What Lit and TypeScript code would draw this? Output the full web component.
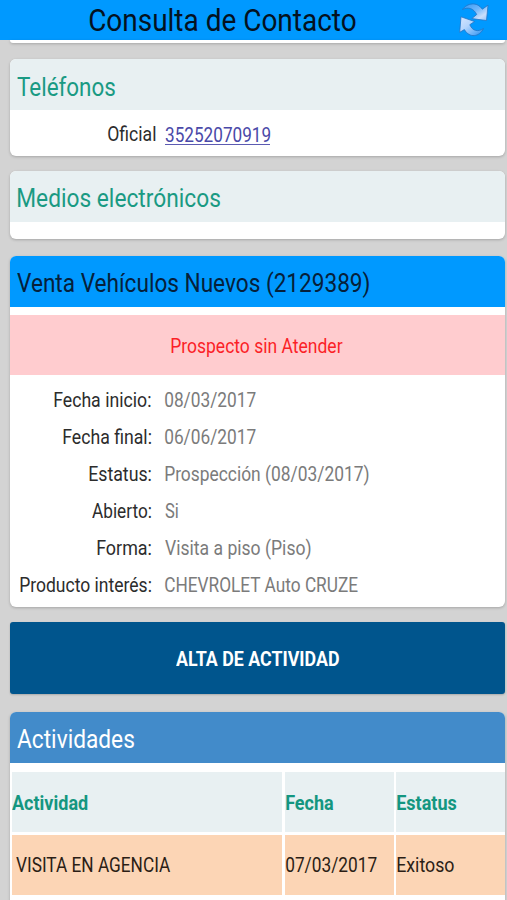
import { LitElement, html, css } from "lit";
import { customElement, property } from "lit/decorators.js";

const measurer = document.createElement("canvas").getContext("2d")!;

/** One line of Roboto, narrowed horizontally so its glyphs span `w` pixels. */
@customElement("narrow-text")
class NarrowText extends LitElement {
  @property({ type: Number }) w = 100;
  @property({ type: Number }) size = 21;
  @property({ type: Number }) weight = 400;
  @property() text = "";

  static styles = css`
    :host { display: block; flex: none; white-space: nowrap; line-height: 1.2; }
    .line { display: inline-block; transform-origin: 0 50%; }
  `;

  render() {
    measurer.font = `${this.weight} ${this.size}px Roboto`;
    const m = measurer.measureText(this.text);
    const ink = m.actualBoundingBoxLeft + m.actualBoundingBoxRight;
    const s = this.w / ink;
    const shift = m.actualBoundingBoxLeft * s;
    return html`<style>:host { width: ${this.w}px; }</style><span class="line"
      style="font-size:${this.size}px;font-weight:${this.weight};transform:translateX(${shift}px) scaleX(${s})">${this.text}</span>`;
  }
}

const line = (text: string, w: number, size = 21, weight = 400) =>
  html`<narrow-text .text=${text} .w=${w} .size=${size} .weight=${weight}></narrow-text>`;

const details: [string, number, string, number][] = [
  ["Fecha inicio:", 96.5, "08/03/2017", 90.5],
  ["Fecha final:", 88, "06/06/2017", 90.5],
  ["Estatus:", 62, "Prospección (08/03/2017)", 203.5],
  ["Abierto:", 59, "Si", 13],
  ["Forma:", 54, "Visita a piso (Piso)", 145.5],
  ["Producto interés:", 131, "CHEVROLET Auto CRUZE", 193.5],
];

@customElement("app-root")
class AppRoot extends LitElement {
  static styles = css`
    :host { display: block; width: 507px; height: 900px; overflow: hidden; background: #d3d3d3; font-family: Roboto, sans-serif; color: #2c2c2c; }
    * { box-sizing: border-box; }
    .bar { height: 40px; padding-top: 1px; background: #0099ff; color: #04121f; display: grid; grid-template-columns: 89px 1fr 49px; align-items: center; }
    .title { grid-column: 2; }
    .refresh { display: block; width: 32px; height: 36px; margin-top: -2px; }
    .page { padding: 0 2.5px 0 10.3px; }
    .card { background: #fff; border-radius: 6px; overflow: hidden; box-shadow: 0 1px 3px rgba(0,0,0,.22); }
    .rest { height: 3px; border-radius: 0 0 6px 6px; margin-bottom: 16.3px; }
    .head { height: 51px; padding: 5px 0 0 7px; display: flex; align-items: center; background: #e8f0f2; color: #1a9a83; }
    .phones { height: 96.4px; margin-bottom: 15.3px; }
    .phone { height: 45.4px; padding-top: 4px; display: grid; grid-template-columns: 145.7px 1fr; column-gap: 9px; align-items: center; }
    .label { display: flex; justify-content: flex-end; }
    .link { color: #4a49a8; display: flex; }
    .underlined { border-bottom: 1.4px solid #5c5bb2; height: 20px; line-height: 1; }
    .underlined narrow-text { line-height: 1; }
    .media { height: 68.3px; margin-bottom: 16.4px; }
    .media .head { padding-left: 8px; }
    .sale { height: 351.6px; margin-bottom: 15px; }
    .sale .head { background: #0099ff; color: #06203a; padding-top: 4px; }
    .alert { height: 60px; margin: 8.8px 0 6.4px; padding: 2px 1px 0 0; background: #ffcccf; color: #fb1f27; display: flex; align-items: center; justify-content: center; }
    .row { height: 37.1px; display: grid; grid-template-columns: 140.7px 1fr; column-gap: 14px; align-items: center; }
    .value { color: #7b7b7b; }
    .button { display: flex; align-items: center; justify-content: center; width: 100%; height: 72px; border: 0; border-radius: 3px; padding: 2px 0 0 1px; margin: 0 0 17.5px; background: #00558d; color: #fff; font-family: inherit; box-shadow: 0 1px 2px rgba(0,0,0,.2); }
    .acts { height: 200px; }
    .acts .head { background: #428bca; color: #fff; padding-top: 4px; }
    .table { margin-top: 9px; padding-left: 1.7px; display: grid; grid-template-columns: 270.5px 109px 1fr; gap: 3.5px 2.5px; }
    .cell { height: 60px; display: flex; align-items: center; padding: 0 0 0 1px; }
    .th { background: #e8f0f2; color: #149680; padding-top: 3px; }
    .td { background: #fcd5b5; color: #2b1e16; }
    .th.first { padding-left: 0; }
    .td.first { padding-left: 4px; }
  `;

  render() {
    return html`
      <header class="bar">
        <div class="title">${line("Consulta de Contacto", 266.5, 32)}</div>
        <svg class="refresh" viewBox="458 1 32 36">
          <defs>
            <linearGradient id="g" x1="0" y1="0" x2="1" y2="1">
              <stop offset="0" stop-color="#3399f5" /><stop offset=".45" stop-color="#6fb6fb" /><stop offset=".75" stop-color="#c9defb" /><stop offset="1" stop-color="#8fc2fb" />
            </linearGradient>
            <linearGradient id="h" x1="0" y1="0" x2="1" y2="1">
              <stop offset="0" stop-color="#d6e6ff" /><stop offset=".4" stop-color="#b5d5fd" /><stop offset=".75" stop-color="#62aef8" /><stop offset="1" stop-color="#2389ea" />
            </linearGradient>
          </defs>
          <path d="M462.5 8.5C467 2 477 .3 482.3 8.2L488 4.2L486.5 19.5L471.8 17.6L476.7 13.5C473.8 7.5 468.3 5.5 462.5 8.5Z" fill="url(#g)" stroke="#2474c4" stroke-width=".8" stroke-linejoin="round" />
          <path d="M483.5 27.5C479.5 36 469.5 37.5 464.4 28.6L459.7 31.3L461 15.8L474.6 20.5L469.8 23.7C472.4 30 478 31.3 483.5 27.5Z" fill="url(#h)" stroke="#2474c4" stroke-width=".8" stroke-linejoin="round" />
        </svg>
      </header>
      <main class="page">
        <div class="card rest"></div>
        <section class="card phones">
          <div class="head">${line("Teléfonos", 98.5, 26)}</div>
          <div class="phone">
            <div class="label">${line("Oficial", 47.5)}</div>
            <div class="link"><div class="underlined">${line("35252070919", 105.5)}</div></div>
          </div>
        </section>
        <section class="card media">
          <div class="head">${line("Medios electrónicos", 202.5, 26)}</div>
        </section>
        <section class="card sale">
          <div class="head">${line("Venta Vehículos Nuevos (2129389)", 352.5, 26)}</div>
          <div class="alert">${line("Prospecto sin Atender", 171.5)}</div>
          ${details.map(([label, lw, value, vw]) => html`
            <div class="row">
              <div class="label">${line(label, lw)}</div>
              <div class="value">${line(value, vw)}</div>
            </div>`)}
        </section>
        <button class="button">${line("ALTA DE ACTIVIDAD", 163, 21, 700)}</button>
        <section class="card acts">
          <div class="head">${line("Actividades", 117.5, 26)}</div>
          <div class="table">
            <div class="cell th first">${line("Actividad", 75.5, 21, 700)}</div>
            <div class="cell th">${line("Fecha", 47.5, 21, 700)}</div>
            <div class="cell th">${line("Estatus", 60, 21, 700)}</div>
            <div class="cell td first">${line("VISITA EN AGENCIA", 154.5)}</div>
            <div class="cell td">${line("07/03/2017", 90.5)}</div>
            <div class="cell td">${line("Exitoso", 57.5)}</div>
          </div>
        </section>
      </main>
    `;
  }
}
